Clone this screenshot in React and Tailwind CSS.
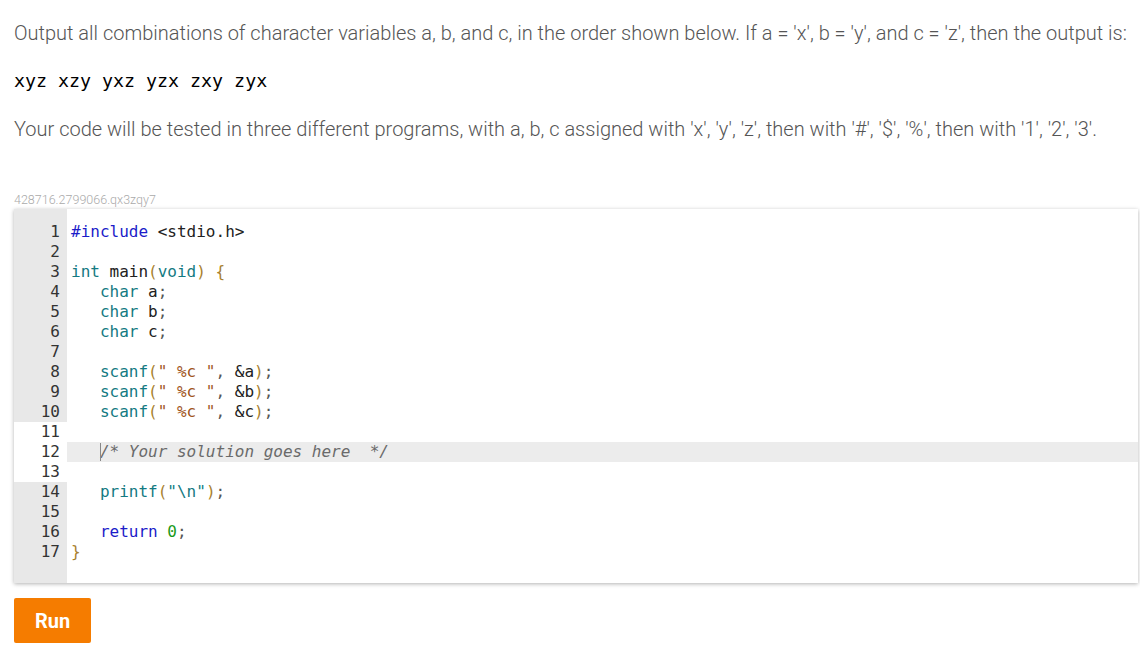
const code = [
  [["#include", "text-[#1c1cc9]"], [" <stdio.h>", "text-[#222]"]],
  [],
  [["int", "text-[#147a82]"], [" main", "text-[#222]"], ["(", "text-[#a8812f]"], ["void", "text-[#147a82]"], [")", "text-[#a8812f]"], [" {", "text-[#a8812f]"]],
  [["   char", "text-[#147a82]"], [" a", "text-[#222]"], [";", "text-[#555]"]],
  [["   char", "text-[#147a82]"], [" b", "text-[#222]"], [";", "text-[#555]"]],
  [["   char", "text-[#147a82]"], [" c", "text-[#222]"], [";", "text-[#555]"]],
  [],
  [["   scanf", "text-[#147a82]"], ["(", "text-[#a8812f]"], ['" %c "', "text-[#a0561e]"], [", ", "text-[#555]"], ["&a", "text-[#222]"], [")", "text-[#a8812f]"], [";", "text-[#555]"]],
  [["   scanf", "text-[#147a82]"], ["(", "text-[#a8812f]"], ['" %c "', "text-[#a0561e]"], [", ", "text-[#555]"], ["&b", "text-[#222]"], [")", "text-[#a8812f]"], [";", "text-[#555]"]],
  [["   scanf", "text-[#147a82]"], ["(", "text-[#a8812f]"], ['" %c "', "text-[#a0561e]"], [", ", "text-[#555]"], ["&c", "text-[#222]"], [")", "text-[#a8812f]"], [";", "text-[#555]"]],
  [],
  [["   ", ""], ["/* Your solution goes here  */", "italic text-[#6a6a6a]"]],
  [],
  [["   printf", "text-[#147a82]"], ["(", "text-[#a8812f]"], ['"\\n"', "text-[#147a82]"], [")", "text-[#a8812f]"], [";", "text-[#555]"]],
  [],
  [["   return", "text-[#1c1cc9]"], [" 0", "text-[#1a9a1a]"], [";", "text-[#555]"]],
  [["}", "text-[#a8812f]"]],
];

export default function App() {
  return (
    <div className="min-h-screen bg-white pl-[14px] pr-[2px] pt-[20px] font-['Roboto',sans-serif]">
      <p className="text-[20px] leading-[27px] font-light text-[#555]">
        Output all combinations of character variables a, b, and c, in the order shown below. If a = 'x', b = 'y', and c = 'z', then the output is:
      </p>

      <pre className="mt-[20px] font-['DejaVu_Sans_Mono',monospace] text-[18.3px] leading-[27px] text-black">
        xyz xzy yxz yzx zxy zyx
      </pre>

      <p className="mt-[22px] text-[20px] leading-[27px] font-light text-[#555]">
        Your code will be tested in three different programs, with a, b, c assigned with 'x', 'y', 'z', then with '#', '$', '%', then with '1', '2', '3'.
      </p>

      <div className="mt-[50px] text-[12.5px] leading-[14px] font-light text-[#aaa]">428716.2799066.qx3zqy7</div>

      {/* Editor */}
      <div className="mt-[2px] flex bg-white shadow-[0_1px_4px_rgba(0,0,0,0.3)] font-['DejaVu_Sans_Mono',monospace] text-[16px] leading-[20px]">
        <div className="w-[53px] shrink-0 bg-[#e8e8e8] pt-[13px] pb-[21px]">
          {code.map((_, i) => (
            <div
              key={i}
              className={
                "pr-[7px] text-right text-[#333] " + (i >= 10 && i <= 12 ? "bg-white" : "")
              }
            >
              {i + 1}
            </div>
          ))}
        </div>
        <div className="flex-1 pt-[13px] pb-[21px]">
          {code.map((line, i) => (
            <div
              key={i}
              className={"relative h-[20px] whitespace-pre pl-[4px] " + (i === 11 ? "bg-[#ececec]" : "")}
            >
              {line.map(([t, c], j) => (
                <span key={j} className={c}>
                  {t}
                </span>
              ))}
              {i === 11 && (
                <span className="absolute left-[33px] top-[1px] h-[18px] w-px bg-[#888]" />
              )}
            </div>
          ))}
        </div>
      </div>

      <button className="mt-[15px] h-[45px] w-[77px] rounded-[2px] bg-[#f57c00] text-[20px] font-bold text-white">
        Run
      </button>
    </div>
  );
}
